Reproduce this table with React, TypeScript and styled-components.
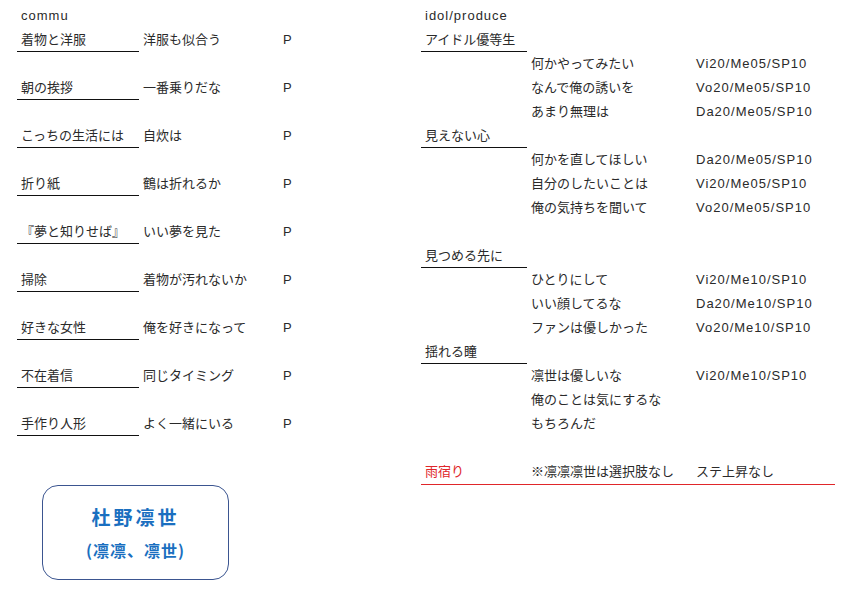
import React from "react";
import styled, { createGlobalStyle } from "styled-components";

const Global = createGlobalStyle`
  html, body {
    margin: 0;
    padding: 0;
    background: #fff;
  }
  body {
    font-family: "Liberation Sans", "Noto Sans CJK JP", sans-serif;
    font-size: 13px;
    color: #2a2a2a;
  }
`;

type Commu = { title: string; choice: string };
type Produce =
  | { kind: "head"; title: string }
  | { kind: "choice"; text: string; stat?: string }
  | { kind: "blank" };

const commu: Commu[] = [
  { title: "着物と洋服", choice: "洋服も似合う" },
  { title: "朝の挨拶", choice: "一番乗りだな" },
  { title: "こっちの生活には", choice: "自炊は" },
  { title: "折り紙", choice: "鶴は折れるか" },
  { title: "『夢と知りせば』", choice: "いい夢を見た" },
  { title: "掃除", choice: "着物が汚れないか" },
  { title: "好きな女性", choice: "俺を好きになって" },
  { title: "不在着信", choice: "同じタイミング" },
  { title: "手作り人形", choice: "よく一緒にいる" },
];

const produce: Produce[] = [
  { kind: "head", title: "アイドル優等生" },
  { kind: "choice", text: "何かやってみたい", stat: "Vi20/Me05/SP10" },
  { kind: "choice", text: "なんで俺の誘いを", stat: "Vo20/Me05/SP10" },
  { kind: "choice", text: "あまり無理は", stat: "Da20/Me05/SP10" },
  { kind: "head", title: "見えない心" },
  { kind: "choice", text: "何かを直してほしい", stat: "Da20/Me05/SP10" },
  { kind: "choice", text: "自分のしたいことは", stat: "Vi20/Me05/SP10" },
  { kind: "choice", text: "俺の気持ちを聞いて", stat: "Vo20/Me05/SP10" },
  { kind: "blank" },
  { kind: "head", title: "見つめる先に" },
  { kind: "choice", text: "ひとりにして", stat: "Vi20/Me10/SP10" },
  { kind: "choice", text: "いい顔してるな", stat: "Da20/Me10/SP10" },
  { kind: "choice", text: "ファンは優しかった", stat: "Vo20/Me10/SP10" },
  { kind: "head", title: "揺れる瞳" },
  { kind: "choice", text: "凛世は優しいな", stat: "Vi20/Me10/SP10" },
  { kind: "choice", text: "俺のことは気にするな" },
  { kind: "choice", text: "もちろんだ" },
  { kind: "blank" },
];

const Page = styled.div`
  display: flex;
  padding: 4px 0 0 17px;
`;

const LeftSheet = styled.div`
  width: 404px;
  display: flex;
  flex-direction: column;
`;

const RightSheet = styled.div`
  width: 414px;
  display: flex;
  flex-direction: column;
`;

const Row = styled.div<{ $cols: string }>`
  display: grid;
  grid-template-columns: ${(p) => p.$cols};
  height: 24px;
`;

const NoteRow = styled(Row)`
  height: 25px;
  border-bottom: 1px solid #e0262a;
  box-sizing: border-box;
`;

const Cell = styled.div<{ $underline?: boolean }>`
  height: 24px;
  line-height: 24px;
  padding-left: 4px;
  box-sizing: border-box;
  white-space: nowrap;
  color: #2a2a2a;
  border-bottom: ${(p) => (p.$underline ? "1px solid #111" : "none")};
`;

const RedCell = styled(Cell)`
  color: #e0262a;
`;

const Latin = styled(Cell)`
  letter-spacing: 1px;
`;

const NameCard = styled.div`
  margin: 49px 0 0 25px;
  width: 187px;
  height: 95px;
  box-sizing: border-box;
  border: 1px solid #3b5590;
  border-radius: 16px;
  display: flex;
  flex-direction: column;
  align-items: center;
  justify-content: center;
  gap: 10px;
  color: #1a6fc0;
  font-family: "Noto Sans CJK JP", sans-serif;
  font-weight: 700;
`;

const CardName = styled.div`
  font-size: 19px;
  letter-spacing: 3px;
  line-height: 24px;
`;

const CardSub = styled.div`
  font-size: 16px;
  letter-spacing: 1px;
  line-height: 22px;
`;

const LEFT_COLS = "122px 140px 60px";
const RIGHT_COLS = "106px 165px 143px";

export default function App() {
  return (
    <>
      <Global />
      <Page>
        <LeftSheet>
          <Row $cols={LEFT_COLS}>
            <Latin>commu</Latin>
          </Row>
          {commu.map((c, i) => (
            <React.Fragment key={c.title}>
              <Row $cols={LEFT_COLS}>
                <Cell $underline>{c.title}</Cell>
                <Cell>{c.choice}</Cell>
                <Latin>P</Latin>
              </Row>
              {i < commu.length - 1 && <Row $cols={LEFT_COLS} />}
            </React.Fragment>
          ))}
          <NameCard>
            <CardName>杜野凛世</CardName>
            <CardSub>(凛凛、凛世)</CardSub>
          </NameCard>
        </LeftSheet>
        <RightSheet>
          <Row $cols={RIGHT_COLS}>
            <Latin>idol/produce</Latin>
          </Row>
          {produce.map((r, i) => {
            if (r.kind === "head")
              return (
                <Row key={i} $cols={RIGHT_COLS}>
                  <Cell $underline>{r.title}</Cell>
                </Row>
              );
            if (r.kind === "choice")
              return (
                <Row key={i} $cols={RIGHT_COLS}>
                  <Cell />
                  <Cell>{r.text}</Cell>
                  <Latin>{r.stat ?? ""}</Latin>
                </Row>
              );
            return <Row key={i} $cols={RIGHT_COLS} />;
          })}
          <NoteRow $cols={RIGHT_COLS}>
            <RedCell>雨宿り</RedCell>
            <Cell>※凛凛凛世は選択肢なし</Cell>
            <Cell>ステ上昇なし</Cell>
          </NoteRow>
        </RightSheet>
      </Page>
    </>
  );
}
